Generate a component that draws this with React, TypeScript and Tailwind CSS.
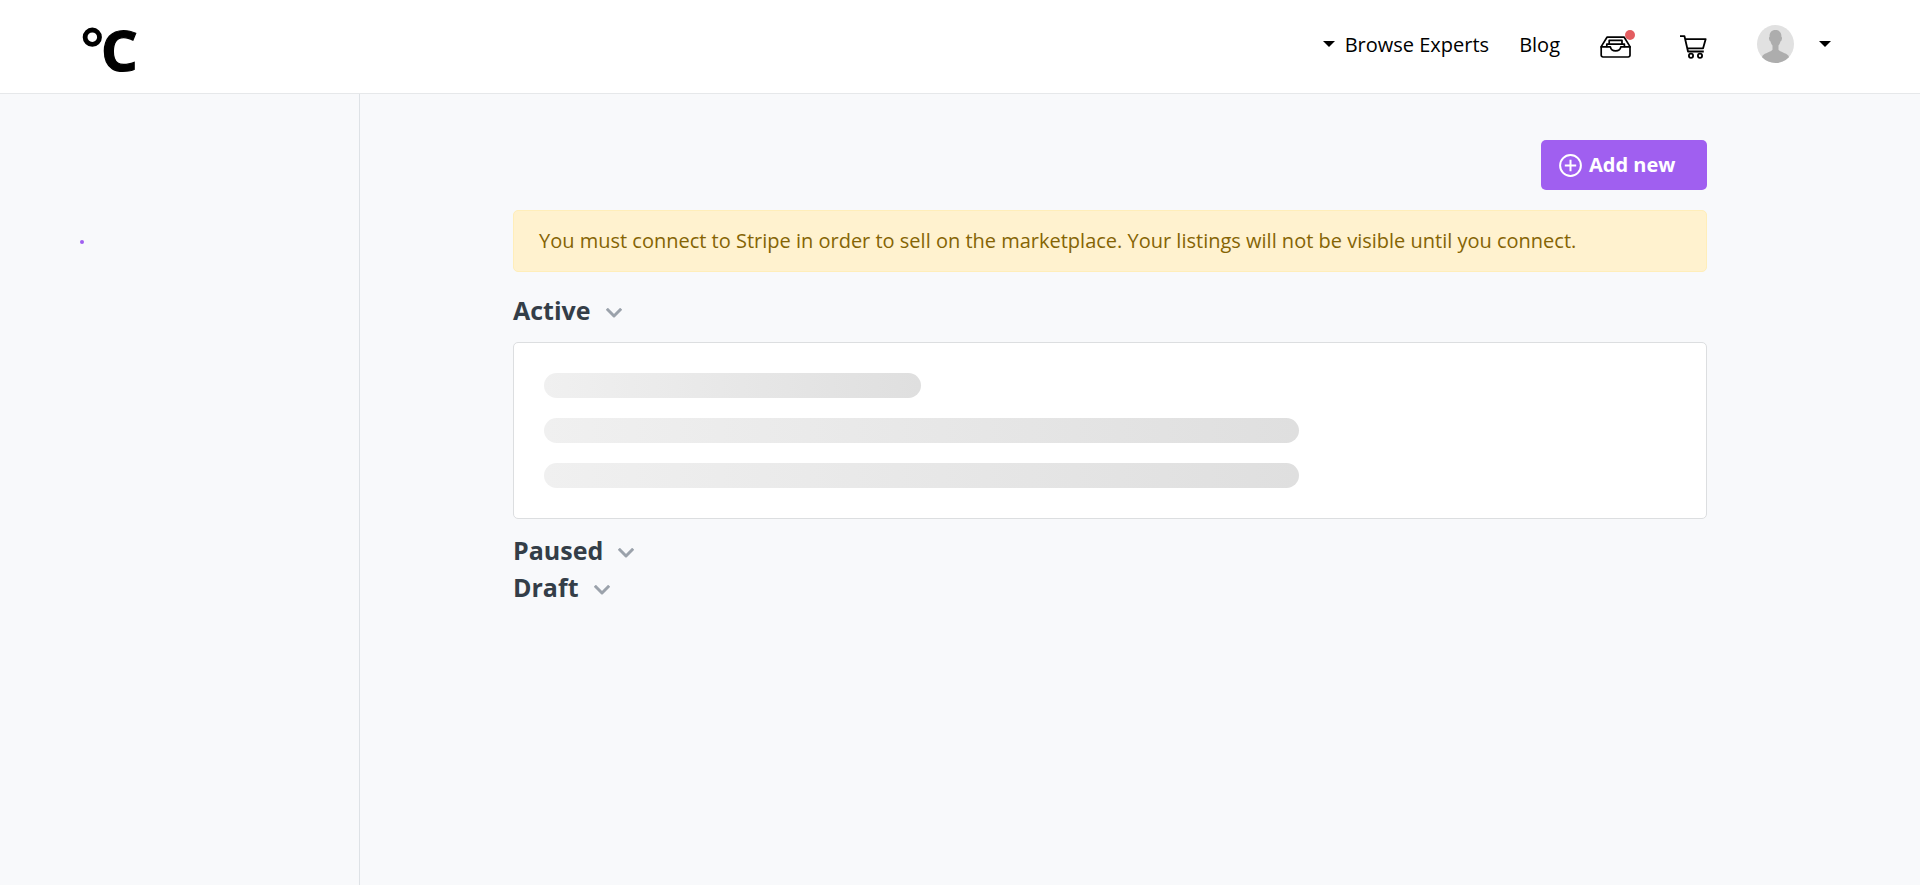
import React from "react";

function Caret() {
  return (
    <svg className="block h-[6px] w-3" viewBox="0 0 12 6" fill="#000">
      <path d="M0 0h12L6 6z" />
    </svg>
  );
}

function Logo() {
  return (
    <svg className="block h-[93px] w-[80px]" viewBox="0 0 80 93">
      <circle cx="12.300" cy="37.200" r="7.200" fill="none" stroke="#000" strokeWidth="4.800" />
      <text transform="translate(21 71.200) scale(1.030 1)" fontFamily="Open Sans, sans-serif" fontWeight="700" fontSize="56" fill="#000" stroke="#000" strokeWidth="1.200">
        C
      </text>
    </svg>
  );
}

function InboxIcon() {
  return (
    <svg className="block h-[22px] w-8" viewBox="0 0 32 22" fill="none" stroke="#000" strokeWidth="1.700" strokeLinejoin="round" strokeLinecap="round">
      <path d="M1.200 10.600 7 1.200h17.200l5.800 9.400v8.600a1.800 1.800 0 0 1-1.800 1.800H3a1.800 1.800 0 0 1-1.800-1.800z" />
      <path d="M1.200 10.900h9.200c.4 2.600 2.400 4 5.200 4s4.800-1.400 5.200-4H30" />
      <path d="M6.800 10.500V8.200h17.600v2.300M9.200 8V4.300h12.800V8" />
    </svg>
  );
}

function CartIcon() {
  return (
    <svg className="block h-6 w-[27px]" viewBox="0 0 27 24" fill="none" stroke="#000" strokeWidth="1.800" strokeLinejoin="round">
      <path d="M0 1.200h4.500L8 16.500h15.800M5 4.100h20.700l-2.600 9.200H7.400" />
      <circle cx="11" cy="20.800" r="2.100" />
      <circle cx="20" cy="20.800" r="2.100" />
    </svg>
  );
}

function Avatar() {
  return (
    <svg className="block h-[38px] w-[37px]" viewBox="0 0 37 38">
      <defs>
        <clipPath id="avatar-clip">
          <ellipse cx="18.500" cy="19" rx="18.500" ry="19" />
        </clipPath>
      </defs>
      <g clipPath="url(#avatar-clip)">
        <path fill="#e1e1e1" d="M0 0h37v38H0z" />
        <path
          fill="#adadad"
          d="M18.500 5c-4.300 0-6.200 3-5.900 7-.9.200-.7 1.500-.3 2.800.3 1 .7 1.600 1.300 1.700.3 1.700 1 3 1.900 4v4.200c-1.500 2.300-7.500 3-10 6L3 38h31l-2.500-7.300c-2.500-3-8.500-3.700-10-6v-4.200c.9-1 1.600-2.300 1.900-4 .6-.1 1-.7 1.300-1.700.4-1.300.6-2.600-.3-2.800.3-4-1.600-7-5.900-7z"
        />
      </g>
    </svg>
  );
}

function PlusCircle() {
  return (
    <svg className="block size-[23px]" viewBox="0 0 23 23" fill="none" stroke="#fff" strokeWidth="2">
      <circle cx="11.500" cy="11.500" r="10.400" />
      <path d="M11.500 5.800v11.400M5.800 11.500h11.400" />
    </svg>
  );
}

function SectionHeading({ title }: { title: string }) {
  return (
    <h2 className="flex h-[37px] items-center text-[25px] font-bold text-[#343e48]">
      <span>{title}</span>
      <svg className="mt-[5px] ml-[15px] block h-[10px] w-4" viewBox="0 0 16 10" fill="none" stroke="#9ba2ab" strokeWidth="3" strokeLinejoin="round">
        <path d="M.8.800 8 8 15.200.800" />
      </svg>
    </h2>
  );
}

function Header() {
  return (
    <header className="flex h-[94px] items-start border-b border-[#e6e8ea] bg-white text-[20px] text-black">
      <div className="pl-20">
        <Logo />
      </div>
      <nav className="ml-auto flex h-[88px] items-center pr-[89px]">
        <Caret />
        <a className="mt-[2px] ml-[10px]">Browse Experts</a>
        <a className="mt-[2px] ml-[30px]">Blog</a>
        <span className="relative ml-10 mt-[6px]">
          <InboxIcon />
          <span className="absolute -top-[6px] right-[-3px] size-[10px] rounded-full bg-[#e35d60]" />
        </span>
        <span className="mt-[5px] ml-12">
          <CartIcon />
        </span>
        <span className="ml-[50px]">
          <Avatar />
        </span>
        <span className="ml-[25px]">
          <Caret />
        </span>
      </nav>
    </header>
  );
}

export default function App() {
  return (
    <div className="flex h-[885px] flex-col overflow-hidden bg-[#f8f9fb] font-['Open_Sans',sans-serif]">
      <Header />
      <div className="flex flex-1">
        <aside className="w-[360px] border-r border-[#dee2e6] pt-[146px] pl-20">
          <div className="size-1 rounded-full bg-[#a05ff0]" />
        </aside>
        <main className="flex-1 pt-[46px] pr-[213px] pl-[153px]">
          <div className="flex justify-end">
            <button className="flex h-[50px] w-[166px] items-center rounded-[5px] bg-[#a05ff0] pl-[18px] text-[20px] font-bold text-white">
              <PlusCircle />
              <span className="ml-[7px]">Add new</span>
            </button>
          </div>
          <div className="mt-5 flex h-[62px] items-center rounded-[5px] border border-[#ffeeba] bg-[#fff2cf] pl-[25px] text-[20px] text-[#856404]">
            You must connect to Stripe in order to sell on the marketplace. Your listings will not be visible until you connect.
          </div>
          <div className="mt-5">
            <SectionHeading title="Active" />
          </div>
          <div className="mt-[13px] mb-[13px] flex h-[177px] flex-col gap-5 rounded-[5px] border border-[#dcdee0] bg-white p-[30px]">
            <div className="h-[25px] w-1/3 rounded-full bg-linear-to-r from-[#f0f0f0] to-[#dfdfdf]" />
            <div className="h-[25px] w-2/3 rounded-full bg-linear-to-r from-[#f0f0f0] to-[#dfdfdf]" />
            <div className="h-[25px] w-2/3 rounded-full bg-linear-to-r from-[#f0f0f0] to-[#dfdfdf]" />
          </div>
          <SectionHeading title="Paused" />
          <SectionHeading title="Draft" />
        </main>
      </div>
    </div>
  );
}
